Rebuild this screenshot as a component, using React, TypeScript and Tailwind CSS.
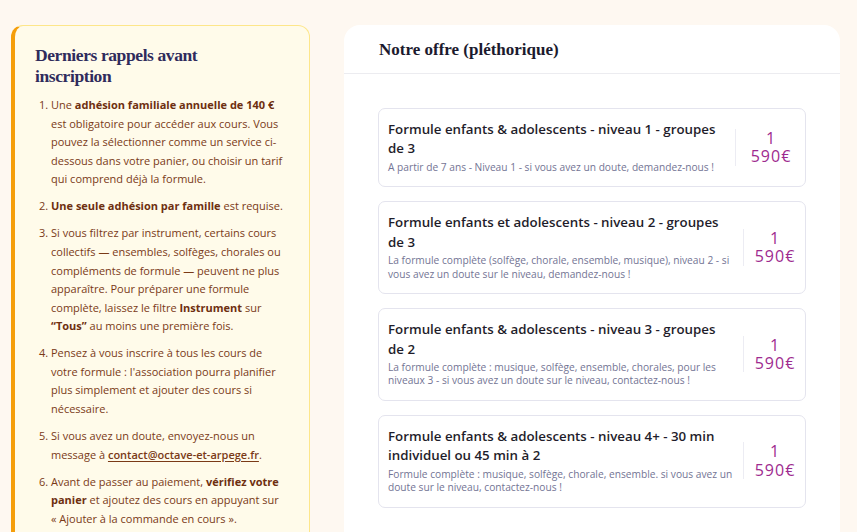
import React from "react";

type Offer = {
  title: string;
  desc: string;
  priceCol: string;
  textPad: string;
};

const offers: Offer[] = [
  {
    title: "Formule enfants & adolescents - niveau 1 - groupes de 3",
    desc: "A partir de 7 ans - Niveau 1 - si vous avez un doute, demandez-nous !",
    priceCol: "w-[70px]",
    textPad: "pr-[10px]",
  },
  {
    title: "Formule enfants et adolescents - niveau 2 - groupes de 3",
    desc: "La formule complète (solfège, chorale, ensemble, musique), niveau 2 - si vous avez un doute sur le niveau, demandez-nous !",
    priceCol: "w-[62px]",
    textPad: "pr-[10px]",
  },
  {
    title: "Formule enfants & adolescents - niveau 3 - groupes de 2",
    desc: "La formule complète : musique, solfège, ensemble, chorales, pour les niveaux 3 - si vous avez un doute sur le niveau, contactez-nous !",
    priceCol: "w-[62px]",
    textPad: "pr-[16px]",
  },
  {
    title: "Formule enfants & adolescents - niveau 4+ - 30 min individuel ou 45 min à 2",
    desc: "Formule complète : musique, solfège, chorale, ensemble. si vous avez un doute sur le niveau, contactez-nous !",
    priceCol: "w-[62px]",
    textPad: "pr-[10px]",
  },
];

const strongCls = "font-bold text-[#6e2f10]";

function Reminders() {
  return (
    <aside className="w-[299px] shrink-0 rounded-[12px] border border-[#fde68a] border-l-4 border-l-[#f59e0b] bg-[#fffbea] pl-[20px] pr-[22px] pt-[19px] pb-6">
      <h2 className="mb-[10px] max-w-[215px] font-['Liberation_Serif',serif] text-[17.5px] font-bold leading-[20.5px] tracking-[-0.4px] text-[#2f2b5c]">
        Derniers rappels avant inscription
      </h2>
      <ol className="list-decimal space-y-[8.4px] pl-[16px] font-['Open_Sans',sans-serif] text-[11px] leading-[18.6px] text-[#7a3a17] marker:text-[#7a3a17]">
        <li>
          Une <strong className={strongCls}>adhésion familiale annuelle de 140 €</strong> est obligatoire pour
          accéder aux cours. Vous pouvez la sélectionner comme un service ci-dessous dans votre panier, ou choisir
          un tarif qui comprend déjà la formule.
        </li>
        <li>
          <strong className={strongCls}>Une seule adhésion par famille</strong> est requise.
        </li>
        <li>
          Si vous filtrez par instrument, certains cours collectifs — ensembles, solfèges, chorales ou compléments
          de formule — peuvent ne plus apparaître. Pour préparer une formule complète, laissez le filtre{" "}
          <strong className={strongCls}>Instrument</strong> sur <strong className={strongCls}>“Tous”</strong> au
          moins une première fois.
        </li>
        <li>
          Pensez à vous inscrire à tous les cours de votre formule : l'association pourra planifier plus simplement
          et ajouter des cours si nécessaire.
        </li>
        <li>
          Si vous avez un doute, envoyez-nous un message à{" "}
          <a href="#" className="font-semibold underline underline-offset-2">
            contact@octave-et-arpege.fr
          </a>
          .
        </li>
        <li>
          Avant de passer au paiement, <strong className={strongCls}>vérifiez votre panier</strong> et ajoutez des
          cours en appuyant sur « Ajouter à la commande en cours ».
        </li>
      </ol>
    </aside>
  );
}

function OfferCard({ offer }: { offer: Offer }) {
  return (
    <div className="flex items-center rounded-[7px] border border-[#e4e4ee] bg-white pt-[11px] pb-[12px] pl-[9px]">
      <div className={`min-w-0 flex-1 ${offer.textPad}`}>
        <div className="font-['Open_Sans',sans-serif] text-[13.3px] font-semibold leading-[19.4px] text-[#1f1d2b]">
          {offer.title}
        </div>
        <div className="mt-[2px] font-['Open_Sans',sans-serif] text-[10.2px] leading-[13.5px] text-[#737494]">
          {offer.desc}
        </div>
      </div>
      <div className={`${offer.priceCol} shrink-0 border-l border-[#ececf3]`}>
        <div className="mx-auto w-min pl-[1px] text-center font-['Open_Sans',sans-serif] text-[16px] font-medium leading-[18.4px] tracking-[1px] text-[#9e2b8f]">
          1 590€
        </div>
      </div>
    </div>
  );
}

export default function App() {
  return (
    <div className="min-h-[532px] bg-[#fef8f1] pl-[11px] pt-[25px]">
      <div className="flex items-start gap-[34px]">
        <Reminders />
        <section className="w-[496px] shrink-0 rounded-t-[16px] bg-white pb-10">
          <header className="flex h-[49px] items-center border-b border-[#ececf0] px-[35px] pt-[2px]">
            <h2 className="font-['Liberation_Serif',serif] text-[17px] font-bold text-[#1c1a2e]">
              Notre offre (pléthorique)
            </h2>
          </header>
          <div className="flex flex-col gap-[14px] px-[34px] pt-[34px]">
            {offers.map((o) => (
              <OfferCard key={o.title} offer={o} />
            ))}
          </div>
        </section>
      </div>
    </div>
  );
}
